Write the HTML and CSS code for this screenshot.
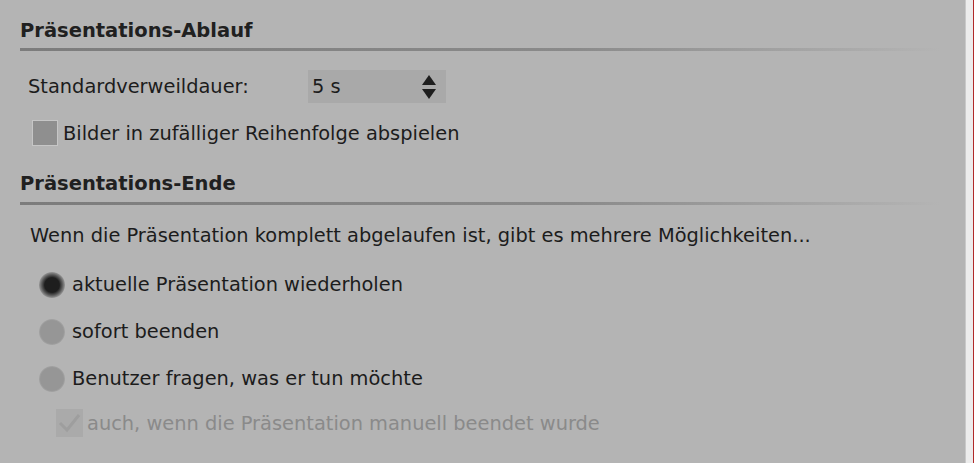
FILE: index.html
```html
<!DOCTYPE html>
<html lang="de">
<head>
<meta charset="utf-8">
<link rel="stylesheet" href="styles.css">
</head>
<body>
<div class="frame">
  <div class="panel">
    <section class="group">
      <h2 class="title">Präsentations-Ablauf</h2>
      <div class="rule"></div>
      <div class="row-field">
        <span class="label">Standardverweildauer:</span>
        <div class="spin">
          <span class="spin-val">5 s</span>
          <svg class="spin-arrows" width="16" height="28" viewBox="0 0 16 28">
            <path d="M8 2 L15 12 L1 12 Z" fill="#1e1e1e"/>
            <path d="M1 16 L15 16 L8 26 Z" fill="#1e1e1e"/>
          </svg>
        </div>
      </div>
      <label class="check-row">
        <span class="check"></span>
        <span>Bilder in zufälliger Reihenfolge abspielen</span>
      </label>
    </section>
    <section class="group group2">
      <h2 class="title">Präsentations-Ende</h2>
      <div class="rule"></div>
      <p class="desc">Wenn die Präsentation komplett abgelaufen ist, gibt es mehrere Möglichkeiten...</p>
      <div class="radios">
        <label class="radio-row"><span class="radio on"></span><span>aktuelle Präsentation wiederholen</span></label>
        <label class="radio-row"><span class="radio"></span><span>sofort beenden</span></label>
        <label class="radio-row"><span class="radio"></span><span>Benutzer fragen, was er tun möchte</span></label>
      </div>
      <label class="check-row disabled">
        <span class="check dis">
          <svg width="27" height="28" viewBox="0 0 27 28"><path d="M4 14 L11 21 L23 6" fill="none" stroke="#9e9e9e" stroke-width="3"/></svg>
        </span>
        <span>auch, wenn die Präsentation manuell beendet wurde</span>
      </label>
    </section>
  </div>
  <div class="edge"></div>
</div>
</body>
</html>
```

FILE: styles.css
```css
html, body {
  margin: 0;
  padding: 0;
  background: #b4b4b4;
}
body {
  font-family: "DejaVu Sans", Verdana, sans-serif;
  color: #1c1c1c;
  font-size: 19.4px;
  width: 974px;
  height: 463px;
  overflow: hidden;
}
.frame {
  display: flex;
  height: 463px;
}
.panel {
  flex: 1;
  background: #b4b4b4;
  border-right: 1px solid #c9c9c9;
  padding: 0 0 0 20px;
}
.edge {
  width: 7px;
  background: #ececec;
  border-right: 1px solid #b02a2a;
}
.title {
  margin: 0;
  padding-top: 18px;
  font-size: 19.5px;
  font-weight: bold;
  line-height: 26px;
  color: #202020;
}
.rule {
  margin-top: 4px;
  height: 3px;
  width: 920px;
  background: linear-gradient(to right, #7c7c7c 0%, #8a8a8a 60%, #b4b4b4 100%);
}
.row-field {
  display: flex;
  align-items: center;
  margin-top: 19px;
  padding-left: 8px;
  height: 33px;
}
.label {
  width: 280px;
}
.spin {
  width: 138px;
  height: 33px;
  background: #a9a9a9;
  display: flex;
  align-items: center;
  justify-content: space-between;
  padding: 0 9px 0 4px;
  box-sizing: border-box;
}
.check-row {
  display: flex;
  align-items: center;
  gap: 5px;
  margin-top: 16px;
  padding-left: 12px;
  height: 28px;
}
.check {
  width: 24px;
  height: 24px;
  border: 1px solid #c6c6c6;
  background: #8f8f8f;
  box-sizing: content-box;
  display: flex;
}
.group2 .title {
  padding-top: 24px;
}
.group2 .rule {
  margin-top: 5px;
}
.desc {
  margin: 18px 0 0 10px;
  line-height: 26px;
}
.radios {
  margin-top: 22px;
  display: flex;
  flex-direction: column;
  gap: 20px;
}
.radio-row {
  display: flex;
  align-items: center;
  gap: 7px;
  padding-left: 19px;
  height: 27px;
}
.radio {
  width: 26px;
  height: 26px;
  border-radius: 50%;
  background: radial-gradient(circle, #969696 0%, #969696 62%, #b0b0b0 78%, #cdcdcd 92%, #b4b4b4 100%);
}
.radio.on {
  background: radial-gradient(circle, #1e1e1e 0%, #1e1e1e 40%, #5a5a5a 56%, #9c9c9c 72%, #cdcdcd 90%, #b4b4b4 100%);
}
.check-row.disabled {
  color: #8a8a8a;
  padding-left: 36px;
  margin-top: 17px;
  gap: 4px;
}
.check.dis {
  border: none;
  width: 27px;
  height: 28px;
  background: #aaaaaa;
}
```
